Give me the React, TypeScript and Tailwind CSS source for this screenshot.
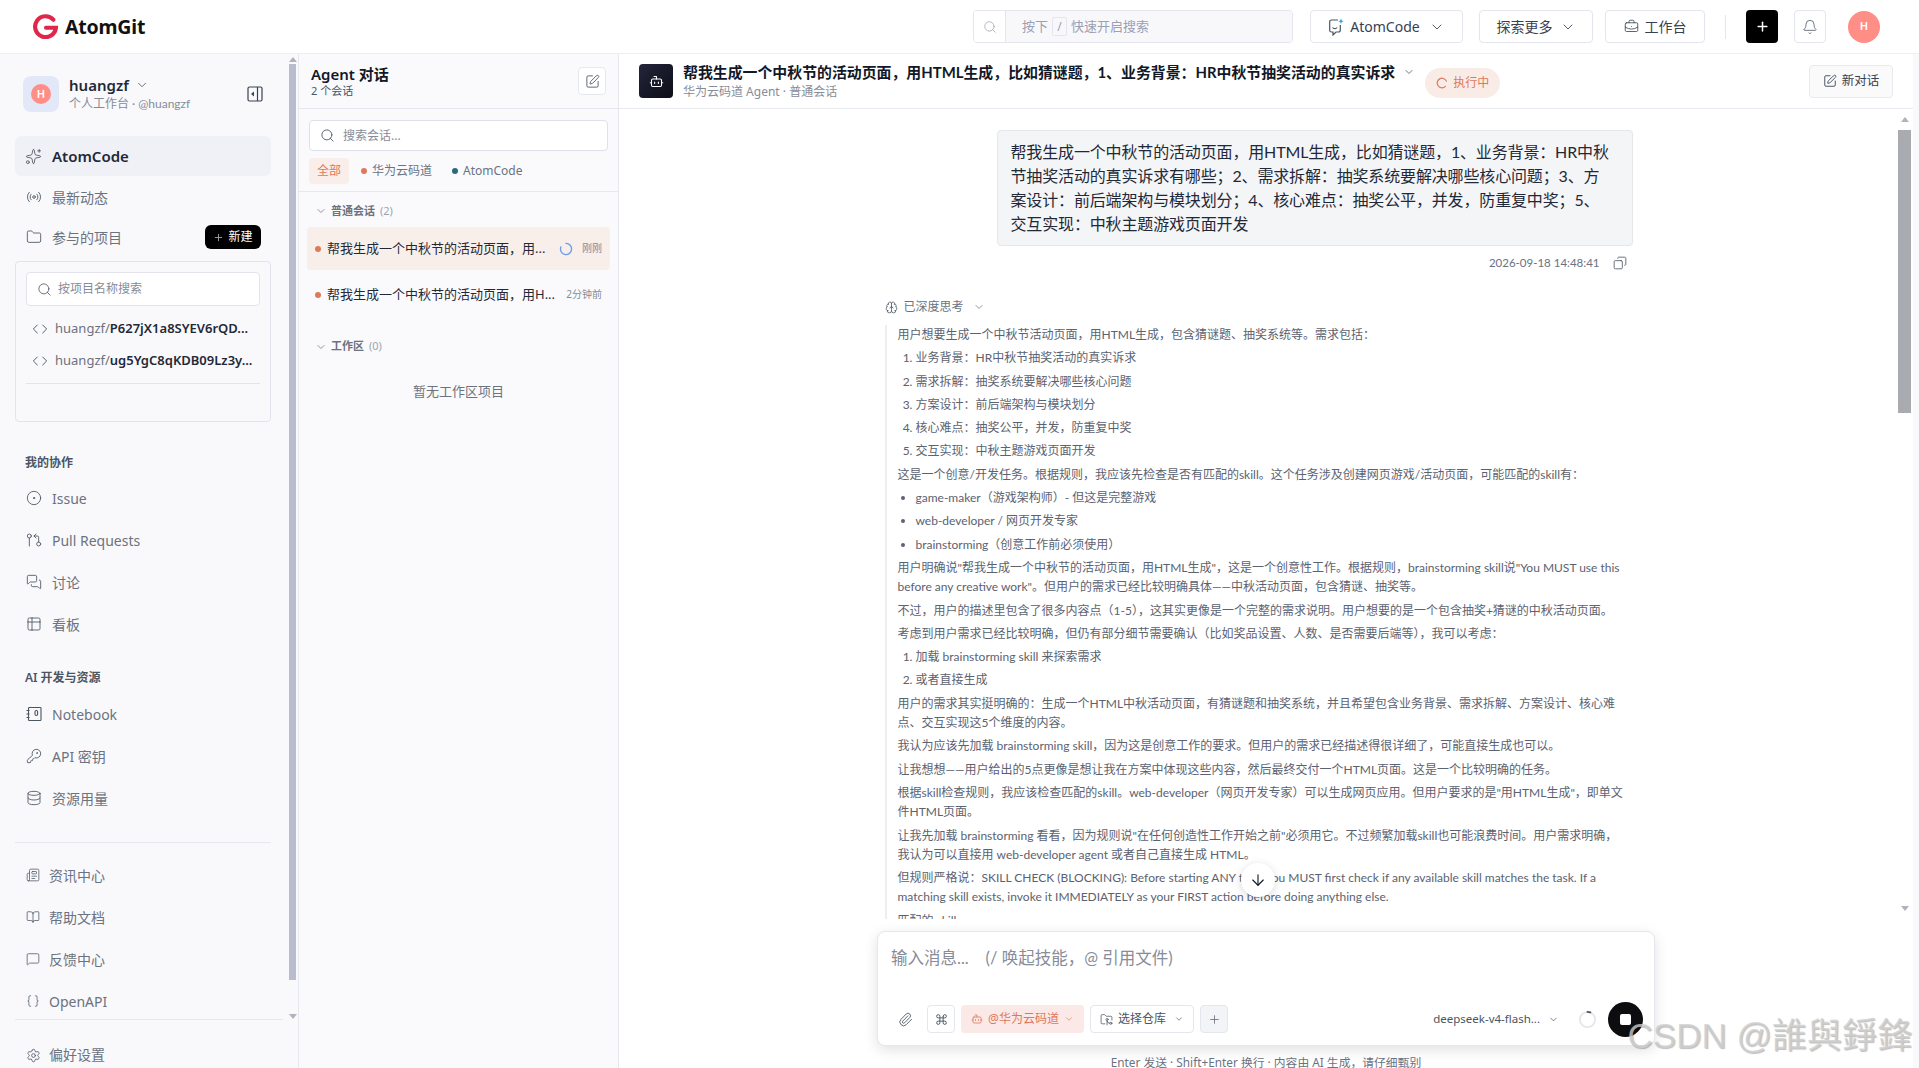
import type { ReactNode } from 'react'
import {
  ArrowDown,
  Bell,
  BookOpen,
  Bot,
  Braces,
  BriefcaseBusiness,
  Brain,
  ChevronDown,
  CircleDot,
  Code,
  Command,
  Copy,
  Database,
  Folder,
  FolderGit2,
  GitPullRequestArrow,
  KeyRound,
  MessageSquare,
  MessagesSquare,
  Newspaper,
  Paperclip,
  Plus,
  Radio,
  Search,
  Settings,
  Sparkles,
  SquarePen,
  Table2,
} from 'lucide-react'

function LogoMark() {
  return (
    <svg width="25" height="25" viewBox="0 0 24 24" fill="none" className="shrink-0">
      <path d="M19.5 5.5A10 10 0 1 0 22 13.2H12.5" stroke="#e0264a" strokeWidth="4" strokeLinecap="round" />
    </svg>
  )
}

function NotebookIcon() {
  return (
    <svg width="16" height="16" viewBox="0 0 16 16" fill="none" stroke="#4b5563" strokeWidth="1.1" className="shrink-0">
      <rect x="2.5" y="1.5" width="12.5" height="13" rx="0.8" />
      <path d="M0.5 4.5h3M0.5 8h3M0.5 11.5h3" />
      <rect x="9" y="4.5" width="2.6" height="5" rx="1.2" />
    </svg>
  )
}

function CollapseIcon() {
  return (
    <svg width="16" height="16" viewBox="0 0 16 16" fill="none" className="shrink-0">
      <rect x="1" y="1" width="14" height="14" rx="1.5" stroke="#374151" strokeWidth="1.2" />
      <path d="M10.5 1v14" stroke="#374151" strokeWidth="1.2" />
      <path d="M7 5.5v5L4 8z" fill="#374151" />
    </svg>
  )
}

function AtomCodeIcon() {
  return (
    <svg width="16" height="18" viewBox="0 0 16 18" fill="none" className="shrink-0">
      <path d="M10 2H3.5A1.8 1.8 0 0 0 1.7 3.8v8.4A1.8 1.8 0 0 0 3.5 14H5v3l3-3h2.5a1.8 1.8 0 0 0 1.8-1.8V7" stroke="#4b5563" strokeWidth="1.2" />
      <path d="M4.5 9.5c1 1.6 3.5 1.6 4.6 0" stroke="#4b5563" strokeWidth="1.2" />
      <path d="M13 0.5l.8 1.9 1.9.8-1.9.8-.8 1.9-.8-1.9-1.9-.8 1.9-.8z" fill="#22a7e0" />
    </svg>
  )
}

function Spinner({ color, track, size, className }: { color: string; track?: string; size: number; className?: string }) {
  return (
    <svg width={size} height={size} viewBox="0 0 20 20" fill="none" className={`shrink-0 ${className ?? ''}`}>
      {track && <circle cx="10" cy="10" r="8" stroke={track} strokeWidth="2" />}
      <path d={track ? 'M10 2a8 8 0 0 1 3 .6' : 'M10 2a8 8 0 1 1-7.4 5'} stroke={color} strokeWidth="2" strokeLinecap="round" />
    </svg>
  )
}

function Avatar({ size }: { size: string }) {
  return (
    <div className={`flex shrink-0 items-center justify-center rounded-full bg-[#ff8e87] text-[11px] font-semibold text-white ${size}`}>
      H
    </div>
  )
}

function ScrollTrack({ className, thumbClass }: { className: string; thumbClass: string }) {
  return (
    <div className={`flex shrink-0 flex-col items-center ${className}`}>
      <div className="mt-[3px] h-0 w-0 border-x-[4px] border-b-[5px] border-x-transparent border-b-[#b0b2bc]" />
      <div className={`w-full ${thumbClass}`} />
      <div className="mt-auto h-0 w-0 border-x-[4px] border-t-[5px] border-x-transparent border-t-[#b0b2bc]" />
    </div>
  )
}

function NavRow({ icon, label }: { icon: ReactNode; label: string }) {
  return (
    <div className="flex h-[42px] items-center gap-[10px] pl-[26px] text-[14px] text-[#6b7280]">
      {icon}
      <span>{label}</span>
    </div>
  )
}

function SmallNavRow({ icon, label }: { icon: ReactNode; label: string }) {
  return (
    <div className="flex h-[42px] items-center gap-[9px] pl-[26px] text-[14px] text-[#6b7280]">
      {icon}
      <span>{label}</span>
    </div>
  )
}

function SectionLabel({ children, className }: { children: ReactNode; className: string }) {
  return <div className={`h-4 pl-[25px] text-[12px] leading-4 font-semibold text-[#4b5563] ${className}`}>{children}</div>
}

function RepoRow({ name }: { name: string }) {
  return (
    <div className="flex h-8 items-center gap-[7px] pl-[6px] text-[13px] text-[#6b7280]">
      <Code size={16} strokeWidth={1.4} className="shrink-0 text-[#4b5563]" />
      <span className="truncate">
        huangzf/<b className="font-semibold text-[#1f2937]">{name}</b>
      </span>
    </div>
  )
}

function Sidebar() {
  const iconCls = 'shrink-0 text-[#4b5563]'
  return (
    <aside className="flex h-full w-[299px] shrink-0 flex-col border-r border-[#e6e7ef] bg-[#f9f9fc]">
      <div className="flex min-h-0 flex-1">
        <div className="min-w-0 flex-1 overflow-hidden">
          <div className="flex items-center pt-[21px] pl-[23px]">
            <div className="flex h-9 w-9 items-center justify-center rounded-[8px] bg-[#e3e8f9]">
              <Avatar size="h-5 w-5" />
            </div>
            <div className="ml-[10px] flex-1">
              <div className="flex items-center gap-[6px] text-[15px] leading-5 font-semibold text-[#1f2937]">
                huangzf
                <ChevronDown size={14} strokeWidth={1.4} className="text-[#4b5563]" />
              </div>
              <div className="font-['Lato','Noto_Sans_CJK_SC',sans-serif] text-[12px] leading-[18px] text-[#868c98]">个人工作台 · @huangzf</div>
            </div>
            <div className="mr-[26px]">
              <CollapseIcon />
            </div>
          </div>

          <div className="mt-[23px] mr-[18px] ml-[15px] flex h-10 items-center gap-[10px] rounded-[6px] bg-[#f0f1f6] pl-[10px] text-[15px] font-semibold text-[#1f2937]">
            <Sparkles size={17} strokeWidth={1.2} className={iconCls} />
            AtomCode
          </div>
          <div className="mt-[1px] flex h-10 items-center gap-[10px] pl-[26px] text-[14px] text-[#6b7280]">
            <Radio size={16} strokeWidth={1.3} className={iconCls} />
            最新动态
          </div>
          <div className="flex h-10 items-center gap-[10px] pl-[26px] text-[14px] text-[#6b7280]">
            <Folder size={16} strokeWidth={1.3} className={iconCls} />
            参与的项目
            <div className="mr-[28px] ml-auto flex h-6 w-14 items-center justify-center gap-1 rounded-[6px] bg-black text-[12px] text-white">
              <Plus size={11} strokeWidth={2} className="text-[#9ca3af]" />
              新建
            </div>
          </div>

          <div className="mt-[4px] mr-[18px] ml-[15px] h-[161px] rounded-[4px] border border-[#e2e3ec] px-[10px] pt-[10px]">
            <div className="flex h-[34px] items-center gap-[6px] rounded-[4px] border border-[#e2e3ec] bg-white pl-[10px] text-[12px] text-[#868c98]">
              <Search size={15} strokeWidth={1.3} className={iconCls} />
              按项目名称搜索
            </div>
            <div className="mt-[7px]">
              <RepoRow name="P627jX1a8SYEV6rQD..." />
              <RepoRow name="ug5YgC8qKDB09Lz3y..." />
            </div>
            <div className="mt-[6px] border-t border-[#e2e3ec]" />
          </div>

          <SectionLabel className="mt-[33px] mb-[6px]">我的协作</SectionLabel>
          <NavRow icon={<CircleDot size={16} strokeWidth={1.3} className={iconCls} />} label="Issue" />
          <NavRow icon={<GitPullRequestArrow size={16} strokeWidth={1.3} className={iconCls} />} label="Pull Requests" />
          <NavRow icon={<MessagesSquare size={16} strokeWidth={1.3} className={iconCls} />} label="讨论" />
          <NavRow icon={<Table2 size={16} strokeWidth={1.3} className={iconCls} />} label="看板" />

          <SectionLabel className="mt-[25px] mb-[7px]">AI 开发与资源</SectionLabel>
          <NavRow icon={<NotebookIcon />} label="Notebook" />
          <NavRow icon={<KeyRound size={16} strokeWidth={1.3} className={iconCls} />} label="API 密钥" />
          <NavRow icon={<Database size={16} strokeWidth={1.3} className={iconCls} />} label="资源用量" />

          <div className="mt-[23px] mr-[18px] mb-[11px] ml-[15px] border-t border-[#e6e7ef]" />
          <SmallNavRow icon={<Newspaper size={14} strokeWidth={1.3} className={iconCls} />} label="资讯中心" />
          <SmallNavRow icon={<BookOpen size={14} strokeWidth={1.3} className={iconCls} />} label="帮助文档" />
          <SmallNavRow icon={<MessageSquare size={14} strokeWidth={1.3} className={iconCls} />} label="反馈中心" />
          <SmallNavRow icon={<Braces size={14} strokeWidth={1.3} className={iconCls} />} label="OpenAPI" />
        </div>
        <ScrollTrack className="mr-[2px] w-[7px]" thumbClass="mt-[2px] h-[916px] bg-[#b9bbcf]" />
      </div>
      <div className="mx-[15px] h-[49px] shrink-0 border-t border-[#e6e7ef] pt-[24px] pl-[11px]">
        <div className="flex items-center gap-2 text-[14px] leading-[22px] text-[#6b7280]">
          <Settings size={15} strokeWidth={1.3} className={iconCls} />
          偏好设置
        </div>
      </div>
    </aside>
  )
}

function ConversationPanel() {
  return (
    <section className="flex h-full w-[320px] shrink-0 flex-col border-r border-[#e6e7ef] bg-[#fafafd]">
      <div className="flex h-[55px] shrink-0 items-center justify-between border-b border-[#e6e7ef] pr-[12px] pl-3">
        <div>
          <div className="text-[15px] leading-5 font-semibold text-[#111827]">Agent 对话</div>
          <div className="text-[11px] leading-[14px] text-[#4b5563]">2 个会话</div>
        </div>
        <div className="flex h-7 w-7 items-center justify-center rounded-[4px] border border-[#e6e7ef] bg-white">
          <SquarePen size={15} strokeWidth={1.4} className="text-[#4b5563]" />
        </div>
      </div>

      <div className="h-[83px] shrink-0 border-b border-[#e6e7ef] px-[10px] pt-[11px]">
        <div className="flex h-[31px] w-[299px] items-center gap-2 rounded-[4px] border border-[#dfe0e8] bg-white pl-[10px] text-[12px] text-[#868c98]">
          <Search size={15} strokeWidth={1.4} className="text-[#4b5563]" />
          搜索会话...
        </div>
        <div className="mt-[7px] flex items-center text-[12px] text-[#6b7280]">
          <div className="flex h-[26px] w-10 items-center justify-center rounded-[4px] bg-[#f9eee9] text-[#e0775a]">全部</div>
          <span className="ml-[12px] h-[6px] w-[6px] rounded-full bg-[#de7a5c]" />
          <span className="ml-[5px]">华为云码道</span>
          <span className="ml-[20px] h-[6px] w-[6px] rounded-full bg-[#2a6a80]" />
          <span className="ml-[5px]">AtomCode</span>
        </div>
      </div>

      <div className="flex h-[35px] items-center gap-[4px] pt-[3px] pl-[16px] text-[11px] font-semibold text-[#6b7280]">
        <ChevronDown size={12} strokeWidth={1.5} />
        <span>
          普通会话 <span className="ml-[2px] font-normal text-[#9ca3af]">(2)</span>
        </span>
      </div>

      <div className="mx-2 flex h-[43px] w-[303px] items-center rounded-[4px] bg-[#f8efeb] pr-2 pl-2">
        <span className="h-[6px] w-[6px] shrink-0 rounded-full bg-[#de7a5c]" />
        <span className="ml-[6px] text-[13px] whitespace-nowrap text-[#1f2937]">帮我生成一个中秋节的活动页面，用...</span>
        <div className="ml-[14px]">
          <Spinner color="#6b9cf0" size={14} />
        </div>
        <span className="ml-auto text-[10px] text-[#868c98]">刚刚</span>
      </div>
      <div className="mx-2 mt-[3px] flex h-[43px] w-[303px] items-center pr-2 pl-2">
        <span className="h-[6px] w-[6px] shrink-0 rounded-full bg-[#de7a5c]" />
        <span className="ml-[6px] text-[13px] whitespace-nowrap text-[#1f2937]">帮我生成一个中秋节的活动页面，用H...</span>
        <span className="ml-auto shrink-0 text-[10px] text-[#868c98]">2分钟前</span>
      </div>

      <div className="mt-[13px] flex h-[35px] items-center gap-[4px] pl-[16px] text-[11px] font-semibold text-[#6b7280]">
        <ChevronDown size={12} strokeWidth={1.5} />
        <span>
          工作区 <span className="ml-[2px] font-normal text-[#9ca3af]">(0)</span>
        </span>
      </div>
      <div className="mt-[17px] text-center text-[13px] leading-5 text-[#6b7280]">暂无工作区项目</div>
    </section>
  )
}

function Thinking() {
  const li = 'mb-1 leading-[19.3px]'
  const p = 'mb-1 leading-[19.3px]'
  return (
    <div className="h-[594px] overflow-hidden border-l-2 border-[#eceef2] pl-[11px] font-['Lato','Noto_Sans_CJK_SC',sans-serif] text-[12px] text-[#5b6270]">
      <p className={p}>用户想要生成一个中秋节活动页面，用HTML生成，包含猜谜题、抽奖系统等。需求包括：</p>
      <ol className="list-decimal pl-[18px]">
        <li className={li}>业务背景：HR中秋节抽奖活动的真实诉求</li>
        <li className={li}>需求拆解：抽奖系统要解决哪些核心问题</li>
        <li className={li}>方案设计：前后端架构与模块划分</li>
        <li className={li}>核心难点：抽奖公平，并发，防重复中奖</li>
        <li className={li}>交互实现：中秋主题游戏页面开发</li>
      </ol>
      <p className={p}>这是一个创意/开发任务。根据规则，我应该先检查是否有匹配的skill。这个任务涉及创建网页游戏/活动页面，可能匹配的skill有：</p>
      <ul className="list-disc pl-[18px]">
        <li className={li}>game-maker（游戏架构师）- 但这是完整游戏</li>
        <li className={li}>web-developer / 网页开发专家</li>
        <li className={li}>brainstorming（创意工作前必须使用）</li>
      </ul>
      <p className={p}>
        用户明确说"帮我生成一个中秋节的活动页面，用HTML生成"，这是一个创意性工作。根据规则，brainstorming skill说"You MUST use this
        <br />
        before any creative work"。但用户的需求已经比较明确具体——中秋活动页面，包含猜谜、抽奖等。
      </p>
      <p className={p}>不过，用户的描述里包含了很多内容点（1-5），这其实更像是一个完整的需求说明。用户想要的是一个包含抽奖+猜谜的中秋活动页面。</p>
      <p className={p}>考虑到用户需求已经比较明确，但仍有部分细节需要确认（比如奖品设置、人数、是否需要后端等），我可以考虑：</p>
      <ol className="list-decimal pl-[18px]">
        <li className={li}>加载 brainstorming skill 来探索需求</li>
        <li className={li}>或者直接生成</li>
      </ol>
      <p className={p}>
        用户的需求其实挺明确的：生成一个HTML中秋活动页面，有猜谜题和抽奖系统，并且希望包含业务背景、需求拆解、方案设计、核心难
        <br />
        点、交互实现这5个维度的内容。
      </p>
      <p className={p}>我认为应该先加载 brainstorming skill，因为这是创意工作的要求。但用户的需求已经描述得很详细了，可能直接生成也可以。</p>
      <p className={p}>让我想想——用户给出的5点更像是想让我在方案中体现这些内容，然后最终交付一个HTML页面。这是一个比较明确的任务。</p>
      <p className={p}>
        根据skill检查规则，我应该检查匹配的skill。web-developer（网页开发专家）可以生成网页应用。但用户要求的是"用HTML生成"，即单文
        <br />
        件HTML页面。
      </p>
      <p className={p}>
        让我先加载 brainstorming 看看，因为规则说"在任何创造性工作开始之前"必须用它。不过频繁加载skill也可能浪费时间。用户需求明确，
        <br />
        我认为可以直接用 web-developer agent 或者自己直接生成 HTML。
      </p>
      <p className={p}>
        但规则严格说：SKILL CHECK (BLOCKING): Before starting ANY task, you MUST first check if any available skill matches the task. If a
        <br />
        matching skill exists, invoke it IMMEDIATELY as your FIRST action before doing anything else.
      </p>
      <p className={p}>匹配的 skill</p>
    </div>
  )
}

function ChatColumn() {
  return (
    <div className="relative flex min-h-0 flex-1">
      <div className="min-w-0 flex-1 overflow-hidden">
        <div className="mx-auto w-[748px] pt-[21px]">
          <div className="ml-auto w-[636px] rounded-[4px] border border-[#e5e7eb] bg-[#f4f5f7] px-[13px] py-[9px] font-['Lato','Noto_Sans_CJK_SC',sans-serif] text-[16px] leading-6 tracking-[-0.15px] text-[#1f2937]">
            帮我生成一个中秋节的活动页面，用HTML生成，比如猜谜题，1、业务背景：HR中秋
            <br />
            节抽奖活动的真实诉求有哪些；2、需求拆解：抽奖系统要解决哪些核心问题；3、方
            <br />
            案设计：前后端架构与模块划分；4、核心难点：抽奖公平，并发，防重复中奖；5、
            <br />
            交互实现：中秋主题游戏页面开发
          </div>
          <div className="mt-[7px] flex h-5 items-center justify-end gap-[13px] pr-[6px] font-['Lato','Noto_Sans_CJK_SC',sans-serif] text-[11.5px] text-[#6b7280]">
            2026-09-18 14:48:41
            <Copy size={14} strokeWidth={1.4} className="scale-x-[-1] text-[#4b5563]" />
          </div>
          <div className="mt-[24px] flex h-5 items-center gap-[6px] text-[12px] text-[#6b7280]">
            <Brain size={13} strokeWidth={1.4} className="text-[#4b5563]" />
            已深度思考
            <ChevronDown size={12} strokeWidth={1.5} className="ml-[3px]" />
          </div>
          <div className="mt-[8px]">
            <Thinking />
          </div>
        </div>
      </div>
      <div className="absolute top-[754px] left-[622px] flex h-[34px] w-[34px] items-center justify-center rounded-full bg-white shadow-[0_2px_10px_rgba(0,0,0,0.15)]">
        <ArrowDown size={18} strokeWidth={1.5} className="text-[#111827]" />
      </div>
      <ScrollTrack className="mt-[5px] mr-[2px] mb-[11px] w-[13px]" thumbClass="mt-[8px] h-[283px] bg-[#a9abb0]" />
    </div>
  )
}

function Composer() {
  return (
    <div className="relative z-10 h-[146px] shrink-0 pt-[9px] pl-[258px]">
      <div className="h-[115px] w-[778px] rounded-[8px] border border-[#e5e6ee] bg-white px-[13px] pt-[14px] shadow-[0_4px_14px_rgba(0,0,0,0.12)]">
        <div className="font-['Lato','Noto_Sans_CJK_SC',sans-serif] text-[16.5px] leading-[24px] text-[#868c98]">
          输入消息...&nbsp;&nbsp;&nbsp;&nbsp;(/ 唤起技能，@ 引用文件)
        </div>
        <div className="mt-[35px] flex h-7 items-center text-[12px]">
          <Paperclip size={15} strokeWidth={1.4} className="ml-[7px] text-[#4b5563]" />
          <div className="ml-[14px] flex h-7 w-7 items-center justify-center rounded-[4px] border border-[#e5e6ee]">
            <Command size={13} strokeWidth={1.5} className="text-[#374151]" />
          </div>
          <div className="ml-[6px] flex h-7 w-[123px] items-center justify-center gap-[5px] rounded-[4px] bg-[#fbe9e7] text-[#e0775a]">
            <Bot size={12} strokeWidth={1.6} />
            @华为云码道
            <ChevronDown size={10} strokeWidth={1.6} />
          </div>
          <div className="ml-[6px] flex h-7 w-[104px] items-center justify-center gap-[5px] rounded-[4px] border border-[#e5e6ee] text-[#4b5563]">
            <FolderGit2 size={13} strokeWidth={1.4} />
            选择仓库
            <ChevronDown size={10} strokeWidth={1.6} className="ml-[3px]" />
          </div>
          <div className="ml-[6px] flex h-7 w-7 items-center justify-center rounded-[4px] border border-[#e5e6ee] bg-[#f3f4f7]">
            <Plus size={13} strokeWidth={1.6} className="text-[#6b7280]" />
          </div>
          <div className="ml-auto flex items-center gap-[8px] text-[11.5px] text-[#4b5563]">
            deepseek-v4-flash...
            <ChevronDown size={11} strokeWidth={1.6} />
          </div>
          <div className="ml-[19px]">
            <Spinner color="#4b5563" track="#e5e7eb" size={19} />
          </div>
          <div className="-mr-[2px] ml-[11px] flex h-[35px] w-[35px] shrink-0 items-center justify-center rounded-full bg-[#0d0d10]">
            <div className="h-[11px] w-[11px] rounded-[2px] bg-white" />
          </div>
        </div>
      </div>
      <div className="mt-[8px] w-[778px] text-center text-[11.8px] leading-4 text-[#6b7280]">
        Enter 发送 · Shift+Enter 换行 · 内容由 AI 生成，请仔细甄别
      </div>
    </div>
  )
}

function MainPanel() {
  return (
    <main className="flex h-full min-w-0 flex-1 flex-col bg-white">
      <div className="flex h-[55px] shrink-0 items-center border-b border-[#e9eaf0] pr-[20px] pl-[20px]">
        <div className="flex h-[34px] w-[34px] shrink-0 items-center justify-center rounded-[4px] bg-gradient-to-br from-[#23253b] to-[#0d0e18]">
          <Bot size={15} strokeWidth={1.7} className="text-white" />
        </div>
        <div className="ml-[10px] self-start pt-[9px]">
          <div className="flex items-center gap-2 font-['Lato','Noto_Sans_CJK_SC',sans-serif] text-[14.9px] leading-[18px] font-bold text-[#111827]">
            帮我生成一个中秋节的活动页面，用HTML生成，比如猜谜题，1、业务背景：HR中秋节抽奖活动的真实诉求
            <ChevronDown size={12} strokeWidth={1.6} className="text-[#4b5563]" />
          </div>
          <div className="text-[12px] leading-[21px] text-[#868c98]">华为云码道 Agent · 普通会话</div>
        </div>
        <div className="mt-[14px] ml-[10px] flex h-[30px] w-[75px] items-center justify-center gap-[5px] self-start rounded-full bg-[#f9ece6] text-[12px] text-[#e0775a]">
          <Spinner color="#e0775a" size={12} className="rotate-[135deg]" />
          执行中
        </div>
        <div className="ml-auto flex h-[33px] w-[84px] items-center justify-center gap-[5px] rounded-[4px] border border-[#e9eaf0] bg-[#fafafb] text-[12.5px] text-[#374151]">
          <SquarePen size={14} strokeWidth={1.5} />
          新对话
        </div>
      </div>
      <ChatColumn />
      <Composer />
    </main>
  )
}

function TopBar() {
  const btn = 'flex h-[33px] items-center justify-center rounded-[4px] border border-[#e4e5ee] bg-white text-[14px] text-[#374151]'
  return (
    <header className="flex h-[54px] shrink-0 items-center border-b border-[#eeeef4] bg-white pr-[39px] pl-[33px]">
      <LogoMark />
      <span className="ml-[7px] text-[19.5px] font-bold tracking-[-0.2px] text-[#111111]">AtomGit</span>
      <div className="ml-auto flex h-[33px] w-[320px] overflow-hidden rounded-[4px] border border-[#e4e5ee] text-[12px] text-[#9ca0b2]">
        <div className="flex w-8 items-center justify-center border-r border-[#e4e5ee] bg-white">
          <Search size={14} strokeWidth={1.3} className="text-[#9ca3af]" />
        </div>
        <div className="flex flex-1 items-center gap-[4px] bg-[#f8f8fb] pl-[16px] text-[13px]">
          按下
          <span className="flex h-[19px] w-[15px] items-center justify-center rounded-[2px] border border-[#e4e5ee] text-[12px]">/</span>
          快速开启搜索
        </div>
      </div>
      <div className={`${btn} ml-[17px] w-[153px] gap-[6px]`}>
        <AtomCodeIcon />
        AtomCode
        <ChevronDown size={16} strokeWidth={1.3} className="ml-[3px]" />
      </div>
      <div className={`${btn} ml-4 w-[114px] gap-[7px]`}>
        探索更多
        <ChevronDown size={16} strokeWidth={1.3} />
      </div>
      <div className={`${btn} ml-3 w-[100px] gap-[6px]`}>
        <BriefcaseBusiness size={15} strokeWidth={1.3} />
        工作台
      </div>
      <div className="mx-5 h-6 w-px bg-[#e4e5ee]" />
      <div className="flex h-[33px] w-8 items-center justify-center rounded-[4px] bg-black">
        <Plus size={15} strokeWidth={2.4} className="text-white" />
      </div>
      <div className="ml-4 flex h-[33px] w-8 items-center justify-center rounded-[4px] border border-[#e4e5ee]">
        <Bell size={16} strokeWidth={1.2} className="text-[#4b5563]" />
      </div>
      <div className="ml-[22px]">
        <Avatar size="h-8 w-8" />
      </div>
    </header>
  )
}

export default function App() {
  return (
    <div className="relative flex h-[1068px] w-full flex-col overflow-hidden bg-white font-['Noto_Sans','Noto_Sans_CJK_SC',sans-serif]">
      <TopBar />
      <div className="flex min-h-0 flex-1">
        <Sidebar />
        <ConversationPanel />
        <MainPanel />
        <div className="w-[6px] shrink-0 bg-[#f9f9fc]" />
      </div>
      <div className="pointer-events-none absolute right-[7px] bottom-[10px] z-20 font-['Liberation_Sans','Noto_Sans_CJK_TC',sans-serif] text-[35px] leading-[44px] whitespace-nowrap text-[#cfcfcf]/80 [text-shadow:1px_1px_1px_rgba(0,0,0,0.25)]">
        CSDN @誰與錚鋒
      </div>
    </div>
  )
}
